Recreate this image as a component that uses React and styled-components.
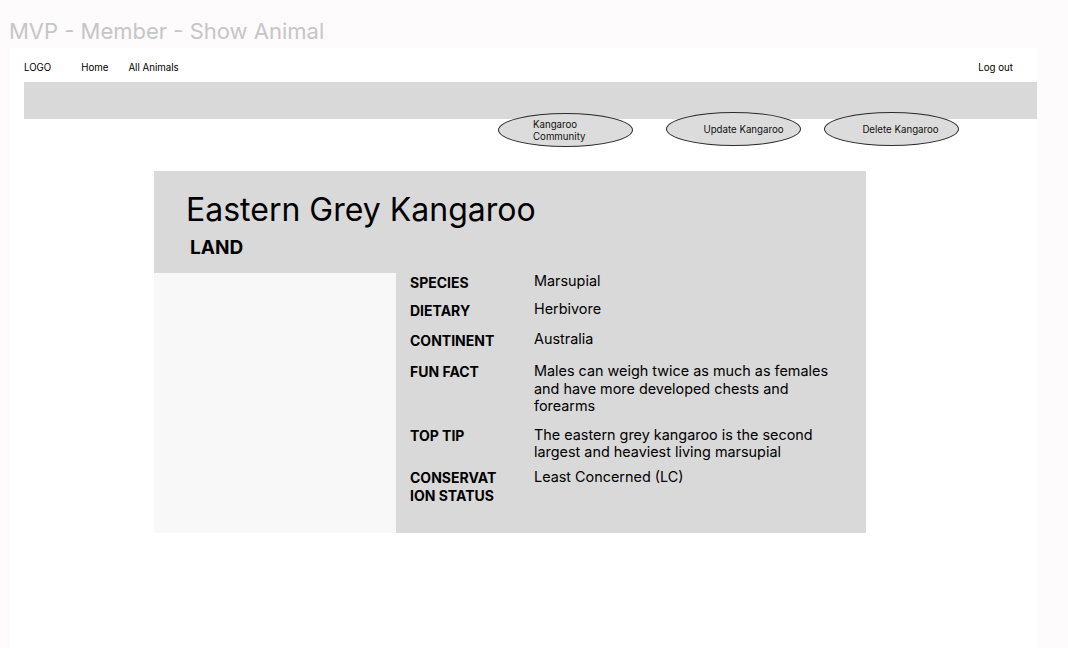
import React from 'react';
import styled, { createGlobalStyle } from 'styled-components';

const GlobalStyle = createGlobalStyle`
  html, body {
    margin: 0;
    padding: 0;
    background: #fdfbfc;
    font-family: Inter, "Noto Sans", "Liberation Sans", sans-serif;
    color: #000;
  }
`;

const Page = styled.div`
  width: 1068px;
  height: 648px;
  overflow: hidden;
  background: #fdfbfc;
`;

const PageTitle = styled.h1`
  margin: 0;
  height: 48px;
  padding: 18px 0 0 9px;
  box-sizing: border-box;
  font-size: 22px;
  line-height: 26px;
  font-weight: 400;
  color: #c6c6c6;
`;

const Frame = styled.div`
  margin-left: 10px;
  width: 1027px;
  height: 600px;
  background: #ffffff;
`;

const Nav = styled.nav`
  display: flex;
  align-items: flex-start;
  height: 34px;
  padding: 14px 24px 0 14px;
  box-sizing: border-box;
  font-size: 9.7px;
  line-height: 12px;
`;

const NavLink = styled.span`
  margin-right: ${p => p.$space}px;
`;

const Spacer = styled.div`
  flex: 1;
`;

const Banner = styled.div`
  margin-left: 14px;
  height: 37px;
  background: #d9d9d9;
`;

const Actions = styled.div`
  display: flex;
  padding-left: 488px;
  margin-top: -6px;
`;

const Pill = styled.button`
  width: 135px;
  height: 34px;
  margin-right: ${p => p.$space}px;
  margin-top: ${p => p.$lift ? -1 : 0}px;
  border: 1px solid #2b2b2b;
  border-radius: 50%;
  background: #dcdcdc;
  font-family: Inter, "Noto Sans", sans-serif;
  font-size: 9.7px;
  line-height: 12px;
  color: #111;
  padding: 2px 0 0 ${p => p.$left}px;
  text-align: ${p => p.$align || 'center'};
`;

const Card = styled.section`
  margin: 24px 0 0 144px;
  width: 712px;
`;

const CardHead = styled.header`
  height: 102px;
  padding: 22px 0 0 32px;
  box-sizing: border-box;
  background: #d9d9d9;
`;

const Title = styled.h2`
  margin: 0;
  font-size: 32px;
  line-height: 34px;
  font-weight: 400;
`;

const Realm = styled.h3`
  margin: 10px 0 0 4px;
  font-size: 19px;
  line-height: 22px;
  font-weight: 700;
`;

const Body = styled.div`
  display: grid;
  grid-template-columns: 242px 1fr;
  height: 260px;
`;

const Photo = styled.div`
  background: #f8f8f8;
`;

const Facts = styled.div`
  background: #d9d9d9;
  padding: 0 0 0 14px;
`;

const Row = styled.div`
  display: grid;
  grid-template-columns: 124px 300px;
  align-items: start;
  margin-top: ${p => p.$space}px;
`;

const Label = styled.div`
  width: 90px;
  font-size: 14px;
  line-height: 18px;
  font-weight: 700;
  word-break: break-all;
  padding-top: ${p => p.$drop}px;
  margin-bottom: -${p => p.$drop}px;
`;

const Value = styled.div`
  font-size: 14.4px;
  line-height: 17.5px;
  margin-top: -1px;
`;

const facts = [
  { label: 'SPECIES', value: 'Marsupial', space: 0, drop: 1 },
  { label: 'DIETARY', value: 'Herbivore', space: 10, drop: 1 },
  { label: 'CONTINENT', value: 'Australia', space: 12, drop: 1 },
  { label: 'FUN FACT', value: 'Males can weigh twice as much as females and have more developed chests and forearms', space: 14, drop: 0 },
  { label: 'TOP TIP', value: 'The eastern grey kangaroo is the second largest and heaviest living marsupial', space: 12, drop: 0 },
  { label: 'CONSERVATION STATUS', value: 'Least Concerned (LC)', space: 8, drop: 0 },
];

export default function App() {
  return (
    <Page>
      <GlobalStyle />
      <PageTitle>MVP - Member - Show Animal</PageTitle>
      <Frame>
        <Nav>
          <NavLink $space={30}>LOGO</NavLink>
          <NavLink $space={20}>Home</NavLink>
          <NavLink $space={0}>All Animals</NavLink>
          <Spacer />
          <NavLink $space={0}>Log out</NavLink>
        </Nav>
        <Banner />
        <Actions>
          <Pill $space={33} $left={34} $align="left">Kangaroo<br />Community</Pill>
          <Pill $space={23} $left={20} $lift>Update Kangaroo</Pill>
          <Pill $space={0} $left={18} $lift>Delete Kangaroo</Pill>
        </Actions>
        <Card>
          <CardHead>
            <Title>Eastern Grey Kangaroo</Title>
            <Realm>LAND</Realm>
          </CardHead>
          <Body>
            <Photo />
            <Facts>
              {facts.map(f => (
                <Row key={f.label} $space={f.space}>
                  <Label $drop={f.drop}>{f.label}</Label>
                  <Value>{f.value}</Value>
                </Row>
              ))}
            </Facts>
          </Body>
        </Card>
      </Frame>
    </Page>
  );
}
